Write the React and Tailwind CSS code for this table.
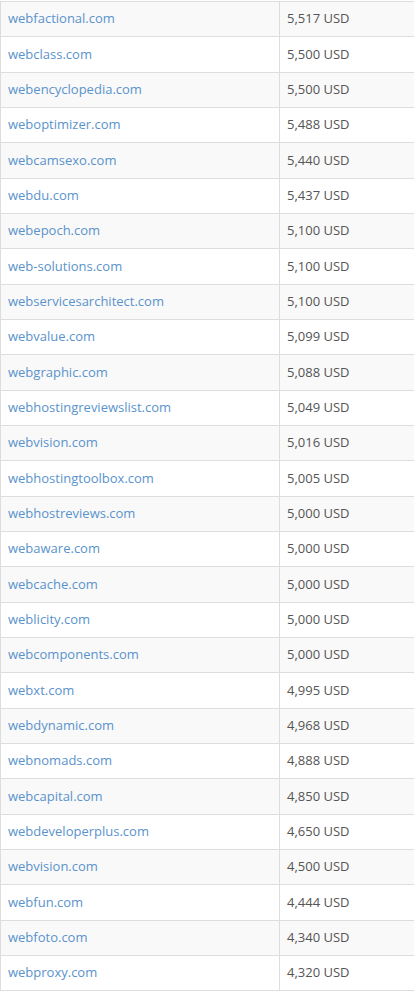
const rows = [
  ["webfactional.com", "5,517 USD"],
  ["webclass.com", "5,500 USD"],
  ["webencyclopedia.com", "5,500 USD"],
  ["weboptimizer.com", "5,488 USD"],
  ["webcamsexo.com", "5,440 USD"],
  ["webdu.com", "5,437 USD"],
  ["webepoch.com", "5,100 USD"],
  ["web-solutions.com", "5,100 USD"],
  ["webservicesarchitect.com", "5,100 USD"],
  ["webvalue.com", "5,099 USD"],
  ["webgraphic.com", "5,088 USD"],
  ["webhostingreviewslist.com", "5,049 USD"],
  ["webvision.com", "5,016 USD"],
  ["webhostingtoolbox.com", "5,005 USD"],
  ["webhostreviews.com", "5,000 USD"],
  ["webaware.com", "5,000 USD"],
  ["webcache.com", "5,000 USD"],
  ["weblicity.com", "5,000 USD"],
  ["webcomponents.com", "5,000 USD"],
  ["webxt.com", "4,995 USD"],
  ["webdynamic.com", "4,968 USD"],
  ["webnomads.com", "4,888 USD"],
  ["webcapital.com", "4,850 USD"],
  ["webdeveloperplus.com", "4,650 USD"],
  ["webvision.com", "4,500 USD"],
  ["webfun.com", "4,444 USD"],
  ["webfoto.com", "4,340 USD"],
  ["webproxy.com", "4,320 USD"],
];

export default function App() {
  return (
    <div className="w-[414px] h-[991px] overflow-hidden bg-white" style={{ fontFamily: '"Open Sans", sans-serif' }}>
      <div className="mt-px border-t border-l border-[#dddddd] text-[13px]">
        {rows.map(([d, p], i) => (
          <div
            key={i}
            className={`flex h-[35.33px] border-b border-[#dddddd] ${i % 2 === 0 ? "bg-[#f9f9f9]" : "bg-white"}`}
          >
            <div className="w-[279px] shrink-0 border-r border-[#dddddd] pl-[7px] flex items-center">
              <a href="#" className="text-[#5a93cc]">{d}</a>
            </div>
            <div className="flex-1 pl-[7px] flex items-center text-[#555555]">{p}</div>
          </div>
        ))}
      </div>
    </div>
  );
}
